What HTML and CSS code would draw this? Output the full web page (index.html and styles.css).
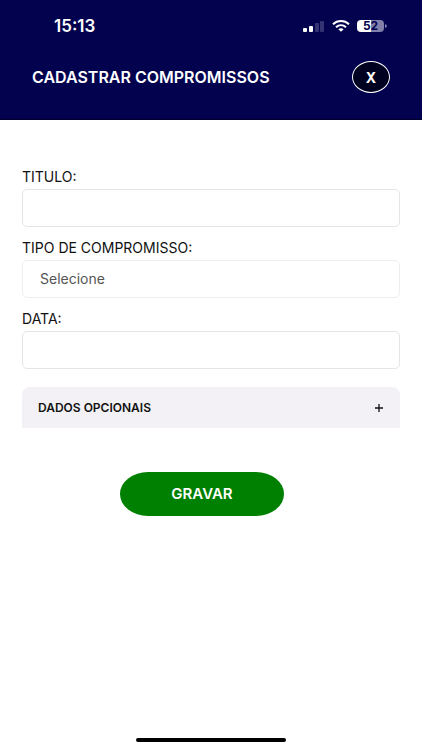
FILE: index.html
```html
<!DOCTYPE html>
<html lang="pt-BR">
<head>
    <meta charset="UTF-8">
    <meta name="viewport" content="width=device-width, initial-scale=1.0">
    <title>Cadastrar Compromissos</title>
    <link rel="stylesheet" href="styles.css">
</head>
<body>
    <header class="header">
        <!-- Status bar -->
        <div class="status-bar">
            <span class="clock">15:13</span>
            <div class="status-icons">
                <svg width="22" height="12" viewBox="0 0 22 12" fill="#fff">
                    <rect x="0" y="8" width="4" height="4" rx="1"/>
                    <rect x="6" y="6" width="4" height="6" rx="1"/>
                    <rect x="12" y="3" width="4" height="9" rx="1" opacity="0.2"/>
                    <rect x="17" y="1" width="4" height="11" rx="1" opacity="0.2"/>
                </svg>
                <svg width="18" height="12" viewBox="0 0 18 12" fill="none" stroke="#fff" stroke-width="2">
                    <path d="M1 4.2C5.5 0 12.5 0 17 4.2"/>
                    <path d="M4 7.2C7 4.5 11 4.5 14 7.2"/>
                    <path d="M6.3 9.2C8 7.9 10 7.9 11.7 9.2L9 11.7Z" fill="#fff" stroke="none"/>
                </svg>
                <div class="battery">
                    <span class="battery-level">52</span>
                    <svg width="2" height="4" viewBox="0 0 2 4"><path d="M0 0Q2 1 2 2T0 4Z" fill="#8080aa"/></svg>
                </div>
            </div>
        </div>
        <div class="title-bar">
            <h1 class="title">CADASTRAR COMPROMISSOS</h1>
            <button type="button" class="close-btn" aria-label="Fechar">X</button>
        </div>
    </header>

    <main class="content">
        <form class="form">
            <div class="field">
                <label for="titulo">TITULO:</label>
                <input type="text" id="titulo" class="control">
            </div>
            <div class="field">
                <label for="tipo">TIPO DE COMPROMISSO:</label>
                <select id="tipo" class="control select">
                    <option value="">Selecione</option>
                </select>
            </div>
            <div class="field">
                <label for="data">DATA:</label>
                <input type="text" id="data" class="control">
            </div>

            <!-- Optional data -->
            <button type="button" class="accordion" aria-expanded="false">
                <span>DADOS OPCIONAIS</span>
                <svg width="8" height="8" viewBox="0 0 8 8" stroke="#111" stroke-width="1.3"><path d="M0 4H8M4 0V8"/></svg>
            </button>

            <div class="actions">
                <button type="submit" class="submit-btn">GRAVAR</button>
            </div>
        </form>
    </main>

    <div class="home-indicator"></div>
</body>
</html>
```
FILE: styles.css
```css
* { box-sizing: border-box; }
body { display: flex; flex-direction: column; min-height: 100vh; margin: 0; background-color: #fff; color: #111; font-family: Inter, "Liberation Sans", sans-serif; }
button, input, select { font-family: inherit; }

.header { padding: 14px 32px 26px; background-color: #02024f; color: #fff; border-bottom: 1px solid #00002a; }
.status-bar { display: flex; justify-content: space-between; align-items: center; height: 24px; padding: 0 3px 0 22px; }
.clock { font-size: 17px; font-weight: 600; }
.status-icons { display: flex; align-items: center; gap: 7px; }
.battery { display: flex; align-items: center; gap: 1px; }
.battery-level { width: 27px; border-radius: 4px; background: linear-gradient(to right, #fff 52%, #8080aa 52%); color: #02024f; font-size: 12px; font-weight: 700; line-height: 12px; text-align: center; }
.title-bar { display: flex; justify-content: space-between; align-items: center; margin-top: 23px; }
.title { margin: 0; font-size: 16px; line-height: 20px; font-weight: 600; }
.close-btn { width: 38px; height: 32px; padding: 0; border: 1px solid #fff; border-radius: 50%; background-color: #000020; color: #fff; font-size: 14px; font-weight: 700; cursor: pointer; }

.content { flex: 1; padding: 48px 22px 0; }
.field { margin-bottom: 12px; }
.field label { display: block; margin-bottom: 3px; font-size: 14px; line-height: 18px; }
.control { display: block; width: 100%; height: 38px; padding: 0 17px 2px; border: 1px solid #e5e5e5; border-radius: 5px; background-color: #fff; color: #555; font-size: 14px; }
.select { appearance: none; border-color: #eee; }
.accordion { display: flex; justify-content: space-between; align-items: center; width: 100%; height: 41px; margin-top: 18px; padding: 0 17px 0 16px; border: none; border-radius: 8px 8px 0 0; background-color: #f3f1f5; color: #111; font-size: 12px; font-weight: 600; cursor: pointer; }
.actions { display: flex; justify-content: center; margin-top: 44px; padding-right: 18px; }
.submit-btn { width: 164px; height: 44px; padding: 0 0 2px; border: none; border-radius: 28px / 22px; background-color: #008000; color: #fff; font-size: 15px; font-weight: 600; cursor: pointer; }

.home-indicator { width: 150px; height: 4px; margin: 0 auto 8px; border-radius: 2px; background-color: #000; }
```
